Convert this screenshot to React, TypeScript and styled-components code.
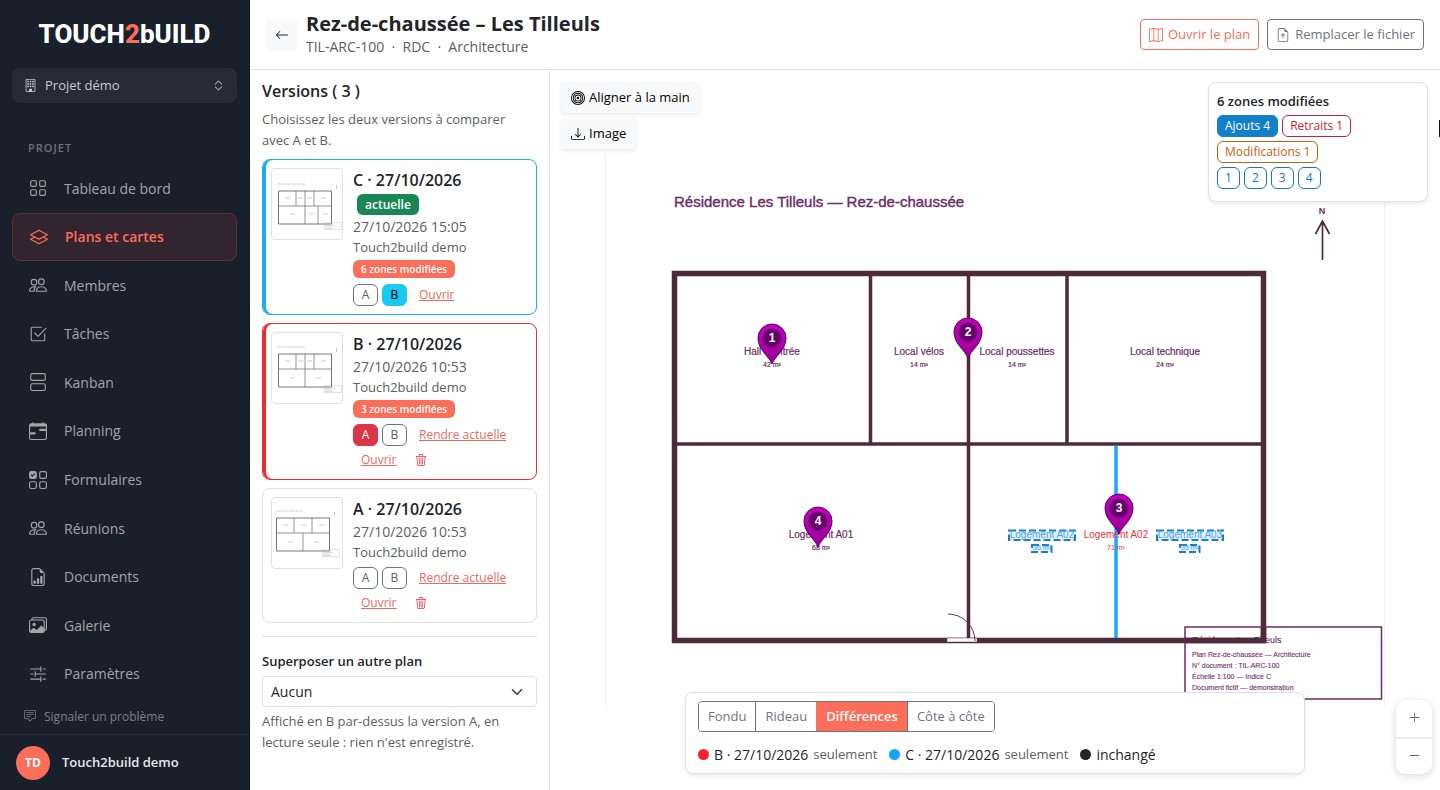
import React from "react";
import styled, { createGlobalStyle, css } from "styled-components";
import {
  BsGrid, BsLayers, BsPeople, BsCheck2Square, BsViewStacked, BsCalendarRange, BsUiChecksGrid,
  BsFileEarmarkBarGraph, BsImages, BsSliders2, BsChatSquareText, BsBuilding, BsChevronExpand,
  BsArrowLeft, BsMap, BsFileEarmarkArrowUp, BsBullseye, BsDownload, BsTrash3, BsPlusLg, BsDashLg,
} from "react-icons/bs";

const coral = "#fa6e5a";
const ink = "#212529";
const muted = "#5b5e62";
const line = "#dee2e6";

const Global = createGlobalStyle`
  *, *::before, *::after { box-sizing: border-box; }
  body { margin: 0; background: #fff; color: ${ink}; font: 400 14px/21px "Open Sans", sans-serif; }
  button, select { font: inherit; margin: 0; cursor: pointer; }
  h1, h2, h3, p, ul { margin: 0; padding: 0; }
  svg { flex: none; display: block; }
`;

const Shell = styled.div`
  display: grid;
  grid-template-columns: 250px minmax(0, 1fr);
  height: 100vh;
  overflow: hidden;
`;

/* ---------- sidebar ---------- */
const Sidebar = styled.aside`
  display: flex;
  flex-direction: column;
  min-height: 0;
  border-right: 1px solid #10141d;
  background: #1a1f2c;
  color: #a3a5ab;
`;
const Brand = styled.a`
  display: flex;
  justify-content: center;
  align-items: center;
  height: 68px;
  color: #fff;
  font: 800 26px/28px Roboto, sans-serif;
  text-decoration: none;
  span { color: ${coral}; }
`;
const ProjectPicker = styled.button`
  display: flex;
  align-items: center;
  gap: 8px;
  height: 35px;
  margin: 0 12px;
  padding: 0 12px;
  border: 0;
  border-radius: 8px;
  background: #272b38;
  color: #c9cacf;
  font-weight: 500;
  font-size: 13px;
  text-align: left;
  span { flex: 1; }
`;
const NavTitle = styled.h2`
  padding: 34px 28px 6px;
  color: #6d717b;
  font-size: 11px;
  line-height: 21px;
  font-weight: 600;
  letter-spacing: 1px;
`;
const NavList = styled.ul`
  flex: 1;
  display: grid;
  grid-auto-rows: 1fr;
  padding: 0 12px;
  list-style: none;
`;
const NavLink = styled.a<{ $active?: boolean }>`
  display: flex;
  align-items: center;
  gap: 16px;
  height: 100%;
  padding: 0 16px;
  border-radius: 8px;
  color: inherit;
  font-size: 14px;
  font-weight: 500;
  text-decoration: none;
  ${(p) => p.$active && css`
    border: 1px solid #5d3238;
    background: #33252f;
    color: ${coral};
    font-weight: 600;
  `}
`;
const IconBox = styled.span`
  display: grid;
  place-items: center;
  width: 20px;
`;
const Report = styled.a`
  display: flex;
  align-items: center;
  gap: 8px;
  height: 36px;
  padding: 0 24px;
  color: #7d8089;
  font-size: 12px;
  text-decoration: none;
`;
const Account = styled.div`
  display: flex;
  align-items: center;
  gap: 12px;
  height: 56px;
  padding: 0 16px;
  border-top: 1px solid #262b38;
  color: #e6e7ea;
  font-size: 13px;
  font-weight: 600;
`;
const Avatar = styled.span`
  display: grid;
  place-items: center;
  width: 34px;
  height: 34px;
  border-radius: 50%;
  background: ${coral};
  color: #fff;
  font-size: 12px;
  font-weight: 700;
`;

/* ---------- header ---------- */
const Main = styled.main`
  display: flex;
  flex-direction: column;
  min-width: 0;
  min-height: 0;
`;
const Header = styled.header`
  display: flex;
  align-items: center;
  gap: 8px;
  height: 70px;
  padding: 0 16px;
  border-bottom: 1px solid ${line};
`;
const BackButton = styled.button`
  display: grid;
  place-items: center;
  width: 32px;
  height: 32px;
  border: 0;
  border-radius: 4px;
  background: #f8f9fa;
  color: ${ink};
`;
const Titles = styled.div`
  flex: 1;
  h1 { font-size: 20px; line-height: 24px; font-weight: 700; }
  p { color: ${muted}; white-space: pre; }
`;
const OutlineButton = styled.button<{ $color: string }>`
  display: flex;
  align-items: center;
  gap: 5px;
  height: 31px;
  padding: 0 8px;
  border: 1px solid ${(p) => p.$color};
  border-radius: 4px;
  background: #fff;
  color: ${(p) => p.$color};
  font-size: 13px;
`;

/* ---------- versions panel ---------- */
const Body = styled.div`
  flex: 1;
  display: grid;
  grid-template-columns: 300px minmax(0, 1fr);
  min-height: 0;
`;
const Panel = styled.section`
  padding: 12px;
  border-right: 1px solid ${line};
  overflow: hidden;
`;
const PanelTitle = styled.h2`
  margin-bottom: 8px;
  font-size: 16px;
  line-height: 19px;
  font-weight: 600;
`;
const Hint = styled.p`
  color: ${muted};
  font-size: 13px;
`;
const Intro = styled(Hint)`
  padding-right: 16px;
`;
const Time = styled.time`
  display: block;
  color: ${muted};
`;
const Cards = styled.div`
  display: grid;
  gap: 8px;
  margin: 8px 0 13px;
`;
const Card = styled.article<{ $accent?: string }>`
  display: grid;
  grid-template-columns: 72px minmax(0, 1fr);
  align-items: start;
  gap: 10px;
  padding: 8px;
  border: 1px solid ${(p) => p.$accent ?? line};
  border-radius: 8px;
  ${(p) => p.$accent && css`box-shadow: inset 3px 0 0 ${p.$accent};`}
  h3 { font-size: 16px; line-height: 24px; font-weight: 600; }
`;
const Thumb = styled.svg`
  width: 72px;
  height: 72px;
  border: 1px solid ${line};
  border-radius: 4px;
`;
const BadgeRow = styled.div<{ $tall?: boolean }>`
  display: flex;
  align-items: center;
  height: ${(p) => (p.$tall ? 24 : 22)}px;
  padding-left: ${(p) => (p.$tall ? 4 : 0)}px;
`;
const Badge = styled.span<{ $green?: boolean }>`
  padding: 0 8px;
  border-radius: 6px;
  background: ${(p) => (p.$green ? "#198754" : coral)};
  color: #fff;
  font-size: ${(p) => (p.$green ? 12 : 10)}px;
  line-height: ${(p) => (p.$green ? 21 : 18)}px;
  font-weight: 600;
`;
const Actions = styled.div`
  display: flex;
  flex-wrap: wrap;
  gap: 3px 4px;
  margin-top: 4px;
`;
const Pick = styled.button<{ $on?: "a" | "b" }>`
  width: 25px;
  height: 22px;
  padding: 0;
  border: 1px solid #6c757d;
  border-radius: 6px;
  background: #fff;
  color: ${muted};
  font-size: 12px;
  line-height: 20px;
  ${(p) => p.$on === "a" && css`background: #dc3545; border-color: #dc3545; color: #fff;`}
  ${(p) => p.$on === "b" && css`background: #1ac9f0; border-color: #1ac9f0; color: #000;`}
`;
const TextButton = styled.button`
  display: flex;
  align-items: center;
  height: 22px;
  padding: 0 8px;
  border: 0;
  background: none;
  color: #ea6a5c;
  font-size: 12px;
  line-height: 20px;
  text-decoration: underline;
`;
const TrashButton = styled(TextButton)`
  padding: 0 6px;
  color: #dc3545;
`;
const Overlay = styled.div`
  display: grid;
  padding-top: 14px;
  border-top: 1px solid ${line};
  label { margin-bottom: 4px; font-size: 13px; font-weight: 600; }
  p { margin-top: 4px; }
`;
const SelectWrap = styled.div`
  position: relative;
  svg { position: absolute; right: 14px; top: 10px; pointer-events: none; }
`;
const Select = styled.select`
  appearance: none;
  display: block;
  width: 100%;
  height: 31px;
  padding: 0 8px;
  border: 1px solid ${line};
  border-radius: 4px;
  background: #fff;
  color: ${ink};
`;

/* ---------- canvas ---------- */
const Canvas = styled.section`
  position: relative;
  display: flex;
  align-items: center;
  justify-content: center;
  min-width: 0;
  overflow: hidden;
`;
const Plan = styled.svg`
  width: calc(100% - 110px);
  height: auto;
  font-family: "Liberation Sans", sans-serif;
`;
const Tools = styled.div`
  position: absolute;
  left: 11px;
  top: 12px;
  display: grid;
  justify-items: start;
  gap: 5px;
`;
const Tool = styled.button`
  display: flex;
  align-items: center;
  gap: 4px;
  height: 31px;
  padding: 0 10px;
  border: 0;
  border-radius: 4px;
  background: #f8f9fa;
  color: #000;
  font-size: 13px;
  font-weight: 500;
  box-shadow: 0 2px 4px rgba(0, 0, 0, 0.08);
`;
const Floating = styled.div`
  position: absolute;
  border: 1px solid ${line};
  border-radius: 8px;
  background: #fff;
  box-shadow: 0 2px 4px rgba(0, 0, 0, 0.08);
`;
const Summary = styled(Floating)`
  right: 12px;
  top: 12px;
  width: 220px;
  padding: 8px 8px 12px;
  h2 { margin-bottom: 3px; font-size: 13px; line-height: 21px; font-weight: 600; }
`;
const Chips = styled.div`
  display: flex;
  flex-wrap: wrap;
  gap: 4px;
  margin-bottom: 4px;
  &:last-child { margin-bottom: 0; }
`;
const Chip = styled.button<{ $color: string; $filled?: boolean }>`
  height: 22px;
  padding: 0 7px;
  border: 1px solid ${(p) => p.$color};
  border-radius: 6px;
  background: ${(p) => (p.$filled ? p.$color : "#fff")};
  color: ${(p) => (p.$filled ? "#fff" : p.$color)};
  font-size: 12px;
  line-height: 20px;
`;
const Modes = styled(Floating)`
  left: 50%;
  bottom: 16px;
  width: 620px;
  max-width: calc(100% - 32px);
  padding: 8px 12px;
  transform: translateX(-50%);
`;
const ModeGroup = styled.div`
  display: flex;
  width: fit-content;
  border: 1px solid #6c757d;
  border-radius: 4px;
  overflow: hidden;
`;
const Mode = styled.button<{ $active?: boolean }>`
  height: 29px;
  padding: 0 9px;
  border: 0;
  background: #fff;
  color: #6c757d;
  font-size: 13px;
  &:not(:first-child) { border-left: 1px solid #6c757d; }
  ${(p) => p.$active && css`
    background: ${coral};
    color: #fff;
    font-weight: 600;
    &:not(:first-child) { border-color: ${coral}; }
  `}
`;
const Legend = styled.div`
  display: flex;
  gap: 12px;
  margin-top: 12px;
`;
const LegendItem = styled.span<{ $color: string }>`
  display: flex;
  align-items: center;
  gap: 5px;
  &::before {
    content: "";
    width: 11px;
    height: 11px;
    border-radius: 50%;
    background: ${(p) => p.$color};
  }
  small { font-size: 13px; color: ${muted}; }
`;
const ZoomGroup = styled.div`
  position: absolute;
  right: 8px;
  bottom: 16px;
  display: grid;
  width: 36px;
  border-radius: 10px;
  background: #fff;
  box-shadow: 0 2px 10px rgba(0, 0, 0, 0.16);
`;
const ZoomButton = styled.button`
  display: grid;
  place-items: center;
  height: 37px;
  padding: 0 0 2px;
  border: 0;
  background: none;
  color: #666;
  &:last-child { border-top: 2px solid #ebebeb; }
`;
const EdgeHandle = styled.span`
  position: absolute;
  right: 0;
  top: 50px;
  width: 1px;
  height: 17px;
  background: #111;
`;

const nav = [
  { label: "Tableau de bord", Icon: BsGrid },
  { label: "Plans et cartes", Icon: BsLayers, active: true },
  { label: "Membres", Icon: BsPeople },
  { label: "Tâches", Icon: BsCheck2Square },
  { label: "Kanban", Icon: BsViewStacked },
  { label: "Planning", Icon: BsCalendarRange },
  { label: "Formulaires", Icon: BsUiChecksGrid },
  { label: "Réunions", Icon: BsPeople },
  { label: "Documents", Icon: BsFileEarmarkBarGraph },
  { label: "Galerie", Icon: BsImages },
  { label: "Paramètres", Icon: BsSliders2 },
];

type Version = {
  id: "A" | "B" | "C";
  time: string;
  accent?: string;
  zones?: number;
  current?: boolean;
  picked?: "a" | "b";
  walls: string;
  labels: number[][];
  dx: number;
  dy: number;
};
const versions: Version[] = [
  { id: "C", time: "15:05", accent: "#1eabf1", zones: 6, current: true, picked: "b", dx: 0, dy: 0,
    walls: "M24 22v15M33 22v15M42 22v15M33 37v18M46 37v18", labels: [[15, 29], [28, 29], [37, 29], [51, 29], [20, 45], [39, 45], [53, 45]] },
  { id: "B", time: "10:53", accent: "#f02b32", zones: 3, picked: "a", dx: 0, dy: -1,
    walls: "M24 22v15M33 22v15M42 22v15M33 37v18", labels: [[15, 29], [28, 29], [37, 29], [51, 29], [20, 46], [46, 46]] },
  { id: "A", time: "10:53", dx: -2, dy: -2,
    walls: "M24 22v15M42 22v15M33 37v18", labels: [[15, 29], [33, 29], [51, 29], [20, 46], [46, 46]] },
];

function VersionCard({ v }: { v: Version }) {
  return (
    <Card $accent={v.accent}>
      <Thumb viewBox="0 0 70 70" role="img" aria-label={`Plan ${v.id}`}>
        <g transform={`translate(${v.dx} ${v.dy})`} fill="none" stroke="#666">
          <path d="M6 15h27" stroke="#aaa" strokeDasharray="2 0.5" strokeWidth="0.6" />
          <path d="M64.500 16v4" stroke="#aaa" strokeWidth="0.6" />
          <path d="M6.500 22h53v33h-53z" strokeWidth="0.9" />
          <path d="M6.500 37h53" strokeWidth="0.7" />
          <path d={v.walls} strokeWidth="0.7" />
          {v.labels.map(([x, y]) => <path key={`${x}-${y}`} d={`M${x - 2} ${y}h5`} stroke="#bbb" strokeWidth="0.7" />)}
          <path d="M52 53.500h17.500v7h-17.500z" stroke="#bbb" strokeWidth="0.4" />
          <path d="M53 55h8M53 56.500h10M53 58h7M53 59.500h8" stroke="#bbb" strokeWidth="0.5" />
        </g>
      </Thumb>
      <div>
        <h3>{v.id} · 27/10/2026</h3>
        {v.current && <BadgeRow $tall><Badge $green>actuelle</Badge></BadgeRow>}
        <Time>27/10/2026 {v.time}</Time>
        <Hint>Touch2build demo</Hint>
        {v.zones && <BadgeRow><Badge>{v.zones} zones modifiées</Badge></BadgeRow>}
        <Actions>
          <Pick $on={v.picked === "a" ? "a" : undefined}>A</Pick>
          <Pick $on={v.picked === "b" ? "b" : undefined}>B</Pick>
          {!v.current && <TextButton>Rendre actuelle</TextButton>}
          <TextButton>Ouvrir</TextButton>
          {!v.current && <TrashButton aria-label="Supprimer"><BsTrash3 size={12} /></TrashButton>}
        </Actions>
      </div>
    </Card>
  );
}

const rooms = [
  { name: "Hall d'entrée", area: "42 m²", x: 167, y: 201 },
  { name: "Local vélos", area: "14 m²", x: 314, y: 201 },
  { name: "Local poussettes", area: "14 m²", x: 412, y: 201 },
  { name: "Local technique", area: "24 m²", x: 560, y: 201 },
  { name: "Logement A01", area: "68 m²", x: 216, y: 384 },
];
const added = [
  { name: "Logement A02", area: "36 m²", x: 437 },
  { name: "Logement A03", area: "35 m²", x: 585 },
];
const pins = [
  { n: 1, x: 167, y: 210 },
  { n: 2, x: 363, y: 204 },
  { n: 4, x: 213, y: 393 },
  { n: 3, x: 514, y: 380 },
];

function FloorPlan() {
  const wall = "#4e2b3b";
  const text = "#6b2d68";
  return (
    <Plan viewBox="0 0 780 552" role="img" aria-label="Comparaison des plans">
      <defs>
        <linearGradient id="pin" x1="0" y1="0" x2="0" y2="1">
          <stop offset="0" stopColor="#c800c0" />
          <stop offset="1" stopColor="#960096" />
        </linearGradient>
      </defs>
      <path d="M0.500 0v552M779.500 0v552" stroke="#f1f1f3" />
      <text x="69" y="53" fontSize="15" fill={text} stroke={text} strokeWidth="0.4">Résidence Les Tilleuls — Rez-de-chaussée</text>
      <g fill="none" stroke={wall}>
        <path d="M717.500 106V67M710.500 80l7-13 7 13" strokeWidth="1.700" />
        <path d="M69.500 119.500h589v367h-589z" strokeWidth="5.500" />
        <path d="M265.500 120v170M363.500 120v367M462 120v170M69 290h590" strokeWidth="3.500" />
      </g>
      <text x="717" y="60" fontSize="9" fontWeight="700" fill={text} textAnchor="middle">N</text>
      <path d="M511 292v192" stroke="#1ea7fd" strokeWidth="3.500" />
      <path d="M342 484h30v4h-30z" fill="#fff" stroke={text} strokeWidth="0.500" />
      <path d="M343 460a27 27 0 0 1 27 27" fill="none" stroke={text} />
      <g textAnchor="middle" fill={text} stroke={text} strokeWidth="0.2">
        {rooms.map((r) => (
          <g key={r.name}>
            <text x={r.x} y={r.y} fontSize="10">{r.name}</text>
            <text x={r.x} y={r.y + 12} fontSize="7">{r.area}</text>
          </g>
        ))}
      </g>
      <g textAnchor="middle" fill="#f0323c">
        <text x="511" y="384" fontSize="10">Logement A02</text>
        <text x="511" y="396" fontSize="7">71 m²</text>
      </g>
      {added.map((r) => (
        <g key={r.name} textAnchor="middle" fill="#4a9cf5">
          <path d={`M${r.x - 33} 376.500h66v9.500h-66zM${r.x - 10} 391h19.500v7h-19.500z`} fill="#e4f2fd" stroke="#1580c4" strokeWidth="2" strokeDasharray="7 3" />
          <text x={r.x} y="384" fontSize="10">{r.name}</text>
          <text x={r.x} y="396" fontSize="7">{r.area}</text>
        </g>
      ))}
      <g fill={text} fontSize="7" stroke={text} strokeWidth="0.1">
        <path d="M580 473h196.500v72H580z" fill="none" stroke={text} strokeWidth="1.500" />
        <text x="587" y="489" fontSize="9">Résidence Les Tilleuls</text>
        <text x="587" y="503">Plan Rez-de-chaussée  —  Architecture</text>
        <text x="587" y="514">N° document : TIL-ARC-100</text>
        <text x="587" y="525">Échelle 1:100  —  Indice C</text>
        <text x="587" y="536">Document fictif — démonstration</text>
      </g>
      <path d="M580 486.500h78.500V473" fill="none" stroke={wall} strokeWidth="5.500" />
      {pins.map((p) => (
        <g key={p.n} transform={`translate(${p.x} ${p.y})`}>
          <path d="M0 0C-3-8-14-14-14-26a14 14 0 0 1 28 0C14-14 3-8 0 0z" fill="url(#pin)" stroke="#5b0060" />
          <circle cy="-26" r="9.500" fill="#66006b" />
          <text y="-22" fontSize="12" fontWeight="700" fill="#fff" textAnchor="middle">{p.n}</text>
        </g>
      ))}
    </Plan>
  );
}

export default function App() {
  return (
    <Shell>
      <Global />
      <Sidebar>
        <Brand href="#">TOUCH<span>2</span>bUILD</Brand>
        <ProjectPicker>
          <BsBuilding size={13} />
          <span>Projet démo</span>
          <BsChevronExpand size={13} />
        </ProjectPicker>
        <NavTitle>PROJET</NavTitle>
        <NavList>
          {nav.map(({ label, Icon, active }) => (
            <li key={label}>
              <NavLink href="#" $active={active}>
                <IconBox><Icon size={18} /></IconBox>
                {label}
              </NavLink>
            </li>
          ))}
        </NavList>
        <Report href="#"><BsChatSquareText size={12} />Signaler un problème</Report>
        <Account><Avatar>TD</Avatar>Touch2build demo</Account>
      </Sidebar>
      <Main>
        <Header>
          <BackButton aria-label="Retour"><BsArrowLeft size={14} /></BackButton>
          <Titles>
            <h1>Rez-de-chaussée – Les Tilleuls</h1>
            <p>{"TIL-ARC-100  ·  RDC  ·  Architecture"}</p>
          </Titles>
          <OutlineButton $color={coral}><BsMap size={14} />Ouvrir le plan</OutlineButton>
          <OutlineButton $color="#6c757d"><BsFileEarmarkArrowUp size={14} />Remplacer le fichier</OutlineButton>
        </Header>
        <Body>
          <Panel>
            <PanelTitle>Versions ( 3 )</PanelTitle>
            <Intro>Choisissez les deux versions à comparer avec A et B.</Intro>
            <Cards>
              {versions.map((v) => <VersionCard key={v.id} v={v} />)}
            </Cards>
            <Overlay>
              <label htmlFor="overlay">Superposer un autre plan</label>
              <SelectWrap>
                <Select id="overlay" defaultValue="Aucun"><option>Aucun</option></Select>
                <svg width="12" height="12" viewBox="0 0 16 16" fill="none" stroke="#343a40" strokeWidth="2" strokeLinecap="round" strokeLinejoin="round">
                  <path d="m2 5 6 6 6-6" />
                </svg>
              </SelectWrap>
              <Hint>Affiché en B par-dessus la version A, en lecture seule : rien n'est enregistré.</Hint>
            </Overlay>
          </Panel>
          <Canvas>
            <FloorPlan />
            <Tools>
              <Tool><BsBullseye size={14} />Aligner à la main</Tool>
              <Tool><BsDownload size={14} />Image</Tool>
            </Tools>
            <Summary>
              <h2>6 zones modifiées</h2>
              <Chips>
                <Chip $color="#1180c8" $filled>Ajouts 4</Chip>
                <Chip $color="#cb2431">Retraits 1</Chip>
                <Chip $color="#c4610f">Modifications 1</Chip>
              </Chips>
              <Chips>
                {[1, 2, 3, 4].map((n) => <Chip key={n} $color="#1976b8">{n}</Chip>)}
              </Chips>
            </Summary>
            <Modes>
              <ModeGroup role="group" aria-label="Mode de comparaison">
                <Mode>Fondu</Mode>
                <Mode>Rideau</Mode>
                <Mode $active>Différences</Mode>
                <Mode>Côte à côte</Mode>
              </ModeGroup>
              <Legend>
                <LegendItem $color="#fa2128">B · 27/10/2026 <small>seulement</small></LegendItem>
                <LegendItem $color="#12a5fb">C · 27/10/2026 <small>seulement</small></LegendItem>
                <LegendItem $color="#212529">inchangé</LegendItem>
              </Legend>
            </Modes>
            <ZoomGroup>
              <ZoomButton aria-label="Zoom avant"><BsPlusLg size={13} /></ZoomButton>
              <ZoomButton aria-label="Zoom arrière"><BsDashLg size={13} /></ZoomButton>
            </ZoomGroup>
            <EdgeHandle />
          </Canvas>
        </Body>
      </Main>
    </Shell>
  );
}
